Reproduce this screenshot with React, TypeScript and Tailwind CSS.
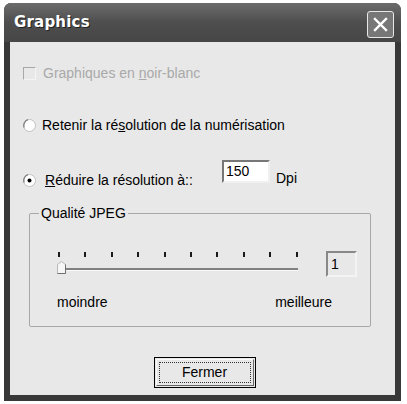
import React from "react";

const font = { fontFamily: '"Liberation Sans", Arial, sans-serif' };

function Radio({ checked }: { checked?: boolean }) {
  return (
    <svg width="13" height="13" viewBox="0 0 13 13" className="shrink-0">
      <circle cx="6.5" cy="6.5" r="6" fill="#ffffff" stroke="#c0c0c0" strokeWidth="1" />
      <path d="M1.2 8.5 A6 6 0 0 1 5 0.7" stroke="#808080" strokeWidth="1.3" fill="none" />
      {checked && <circle cx="6.5" cy="6.5" r="2" fill="#000" />}
    </svg>
  );
}

export default function App() {
  const ticks = [0, 1, 2, 3, 4, 5, 6, 7, 8, 9];
  return (
    <div className="w-[407px] h-[404px] bg-white pt-[3px] pl-[4px]" style={font}>
      <div className="w-[397px] h-[398px] rounded-t-[7px] bg-[#383838] flex flex-col">
        {/* Title bar */}
        <div className="h-[39px] rounded-t-[7px] bg-gradient-to-b from-[#6c6c6c] via-[#4e4e4e] to-[#464646] flex items-center pl-[10px] pr-[7px] justify-between">
          <span
            className="text-white font-bold text-[15px] tracking-[0.2px]"
            style={{ fontFamily: '"DejaVu Sans", sans-serif', textShadow: "1px 1px 0 #222" }}
          >
            Graphics
          </span>
          <div className="w-[27px] h-[27px] mt-[3px] rounded-[3px] border border-[#e8e8e8] bg-[#777777] flex items-center justify-center">
            <svg width="15" height="15" viewBox="0 0 15 15">
              <path d="M2 2 L13 13 M13 2 L2 13" stroke="#ffffff" strokeWidth="2.4" strokeLinecap="square" />
            </svg>
          </div>
        </div>
        {/* Client */}
        <div className="mx-[6px] h-[353px] bg-[#e8e8e8] text-[14px] text-black">
          {/* checkbox */}
          <div className="flex items-center pt-[24px] pl-[13px] h-[38px]">
            <div className="w-[13px] h-[13px] border border-t-[#a8a8a8] border-l-[#a8a8a8] border-b-[#f4f4f4] border-r-[#f4f4f4] bg-[#e8e8e8] shrink-0" />
            <span className="ml-[7px] text-[#a9a9a9]">
              Graphiques en <span className="underline">n</span>oir-blanc
            </span>
          </div>
          {/* radio 1 */}
          <div className="flex items-center mt-[38px] pl-[13px] h-[14px]">
            <Radio />
            <span className="ml-[6px]">
              Retenir la ré<span className="underline">s</span>olution de la numérisation
            </span>
          </div>
          {/* radio 2 */}
          <div className="flex items-start mt-[28px] pl-[13px] h-[24px]">
            <div className="flex items-center mt-[10px]">
              <Radio checked />
              <span className="ml-[9px] w-[177px]">
                <span className="underline">R</span>éduire la résolution à::
              </span>
            </div>
            <div className="w-[48px] h-[23px] bg-white border-2 border-t-[#777] border-l-[#777] border-b-[#f0f0f0] border-r-[#f0f0f0] flex items-center pl-[2px]">
              150
            </div>
            <span className="ml-[6px] mt-[11px] leading-[14px]">Dpi</span>
          </div>
          {/* group box */}
          <div className="ml-[19px] mt-[29px] w-[342px] h-[114px] border border-[#a8a8a8] rounded-[2px] relative">
            <span className="absolute left-[9px] top-[-9px] bg-[#e8e8e8] px-[2px] leading-[16px]">Qualité JPEG</span>
            <div className="flex mt-[37px] pl-[28px]">
              <div className="w-[242px] h-[24px] relative">
                {ticks.map((i) => (
                  <div
                    key={i}
                    className="absolute top-[1px] w-[2px] h-[5px] bg-[#1a1a1a]"
                    style={{ left: `${Math.round(i * 26.4)}px` }}
                  />
                ))}
                <div className="absolute top-[17px] left-[2px] w-[238px] h-[3px] bg-[#808080] border-b border-[#f8f8f8]" />
                <svg className="absolute left-[-1px] top-[10px]" width="9" height="13" viewBox="0 0 9 13">
                  <path d="M0.5 12.5 L0.5 3.5 L4.5 0.5 L8.5 3.5 L8.5 12.5 Z" fill="#f6f6f6" stroke="#b8b8b8" />
                  <path d="M8.5 3.5 L8.5 12.5 L0.5 12.5" fill="none" stroke="#707070" />
                </svg>
              </div>
              <div className="ml-[26px] w-[31px] h-[26px] border-2 border-t-[#888] border-l-[#888] border-b-[#f4f4f4] border-r-[#f4f4f4] bg-[#e8e8e8] flex items-center pl-[3px]">
                1
              </div>
            </div>
            <div className="flex justify-between pl-[27px] pr-[38px] mt-[15px]">
              <span>moindre</span>
              <span>meilleure</span>
            </div>
          </div>
          {/* button */}
          <div className="flex justify-center mt-[30px]">
            <div className="ml-[4px] w-[102px] h-[31px] border border-black bg-[#e8e8e8] p-[1px]">
              <div className="w-full h-full border border-t-[#fafafa] border-l-[#fafafa] border-b-[#666] border-r-[#666] p-[2px]">
                <div className="w-full h-full border border-dotted border-[#333] flex items-center justify-center">
                  Fermer
                </div>
              </div>
            </div>
          </div>
        </div>
      </div>
    </div>
  );
}
